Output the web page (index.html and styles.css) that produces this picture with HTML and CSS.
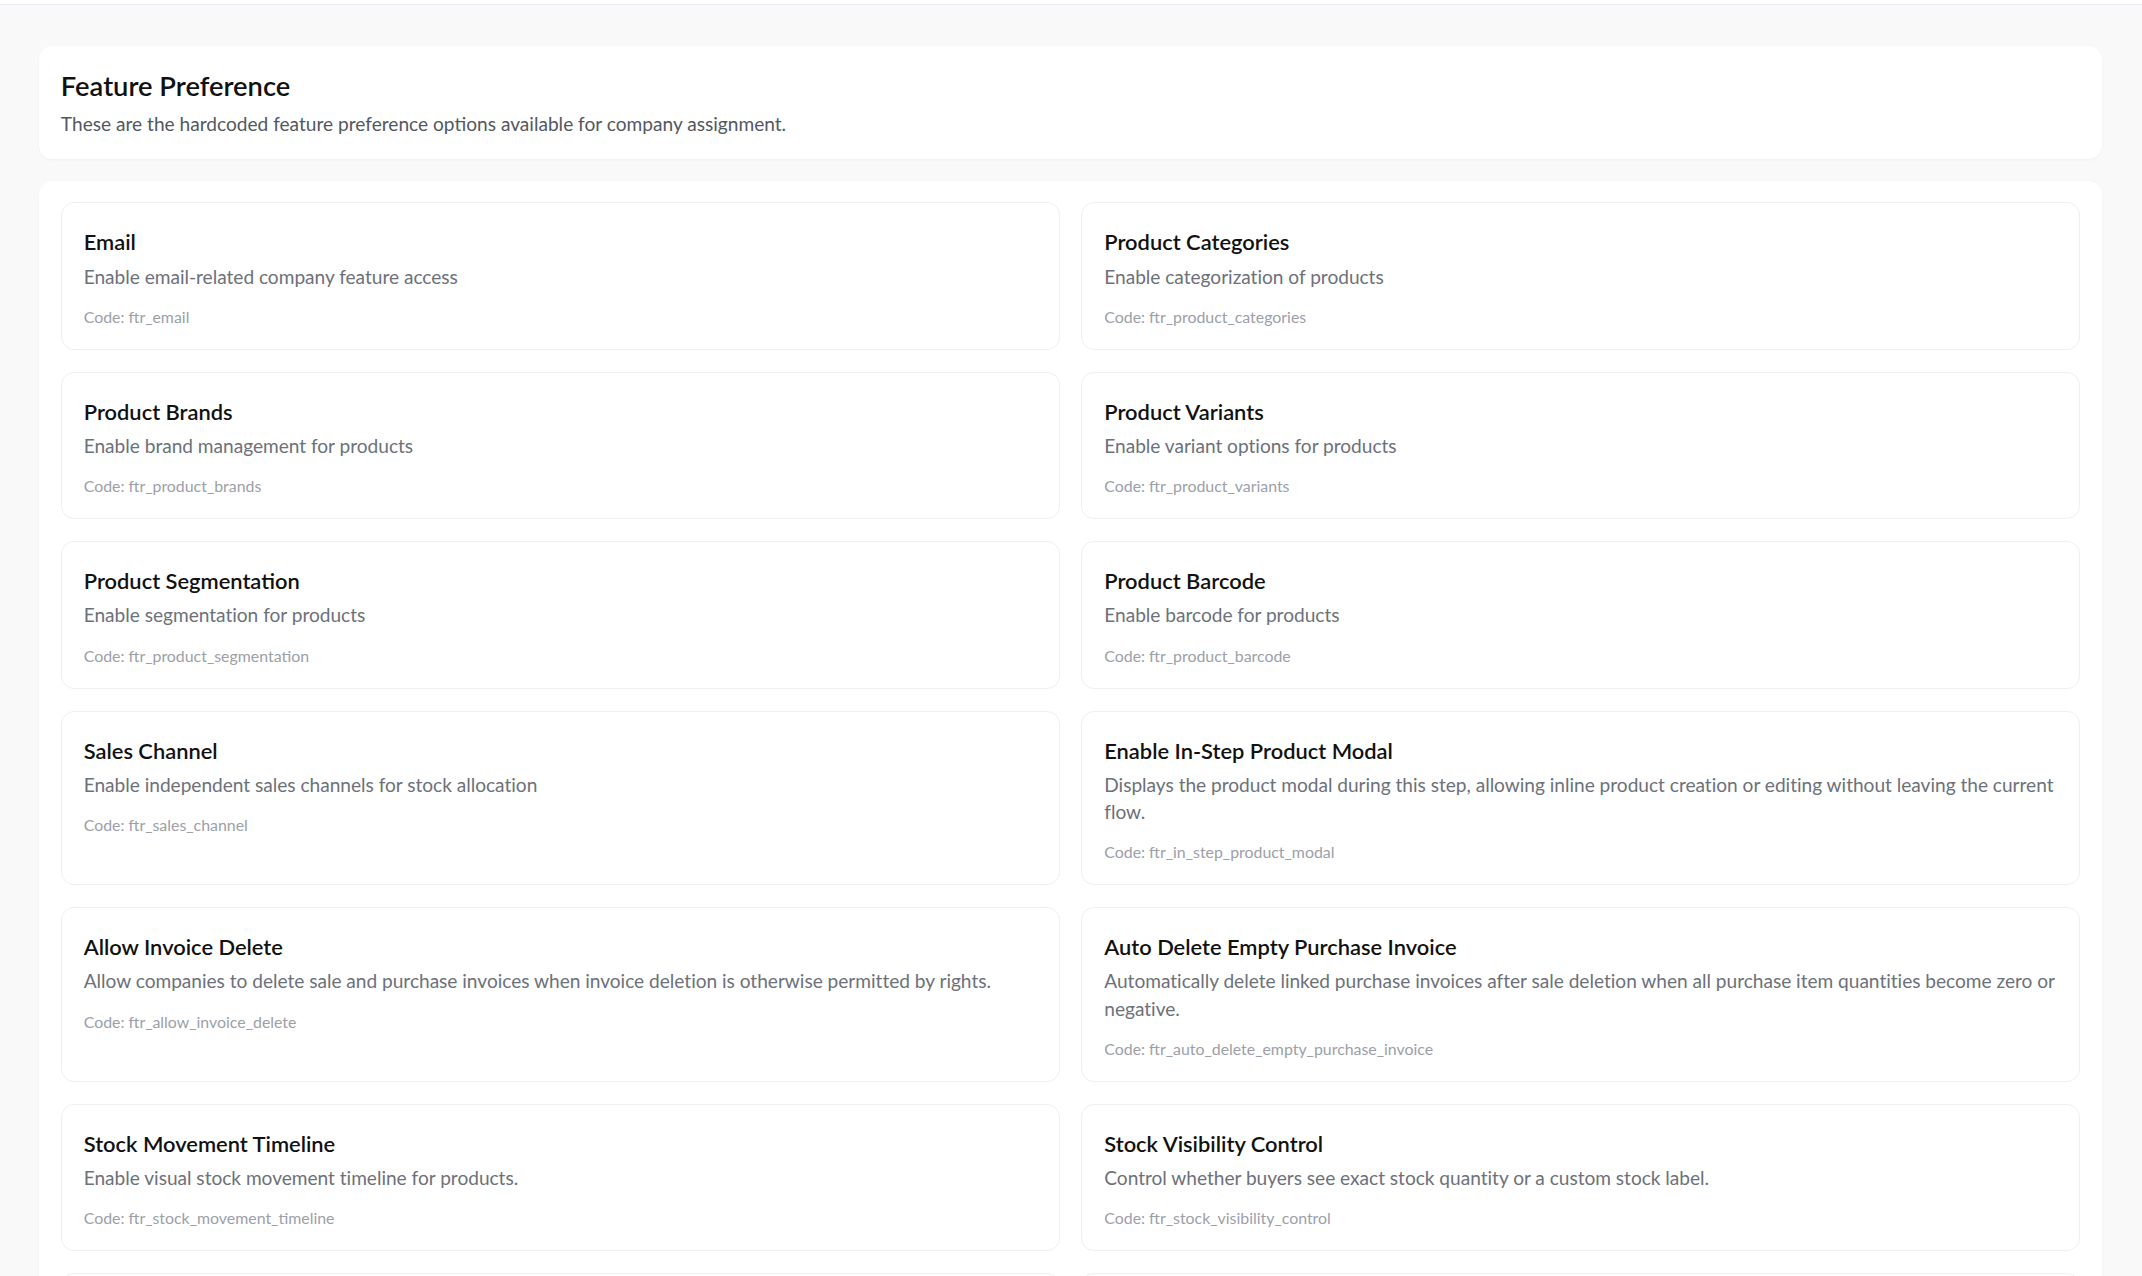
FILE: index.html
```html
<!DOCTYPE html>
<html lang="en">
<head>
<meta charset="utf-8">
<title>Feature Preference</title>
<link rel="stylesheet" href="styles.css">
</head>
<body>
<div class="topbar"></div>
<main class="page">
  <section class="panel header-panel">
    <h1 class="page-title">Feature Preference</h1>
    <p class="page-subtitle">These are the hardcoded feature preference options available for company assignment.</p>
  </section>
  <section class="panel list-panel">
    <div class="feature-grid">
      <div class="feature-card"><h3 class="feature-name">Email</h3><p class="feature-desc">Enable email-related company feature access</p><p class="feature-code">Code: ftr_email</p></div>
      <div class="feature-card"><h3 class="feature-name">Product Categories</h3><p class="feature-desc">Enable categorization of products</p><p class="feature-code">Code: ftr_product_categories</p></div>
      <div class="feature-card"><h3 class="feature-name">Product Brands</h3><p class="feature-desc">Enable brand management for products</p><p class="feature-code">Code: ftr_product_brands</p></div>
      <div class="feature-card"><h3 class="feature-name">Product Variants</h3><p class="feature-desc">Enable variant options for products</p><p class="feature-code">Code: ftr_product_variants</p></div>
      <div class="feature-card"><h3 class="feature-name">Product Segmentation</h3><p class="feature-desc">Enable segmentation for products</p><p class="feature-code">Code: ftr_product_segmentation</p></div>
      <div class="feature-card"><h3 class="feature-name">Product Barcode</h3><p class="feature-desc">Enable barcode for products</p><p class="feature-code">Code: ftr_product_barcode</p></div>
      <div class="feature-card"><h3 class="feature-name">Sales Channel</h3><p class="feature-desc">Enable independent sales channels for stock allocation</p><p class="feature-code">Code: ftr_sales_channel</p></div>
      <div class="feature-card"><h3 class="feature-name">Enable In-Step Product Modal</h3><p class="feature-desc">Displays the product modal during this step, allowing inline product creation or editing without leaving the current flow.</p><p class="feature-code">Code: ftr_in_step_product_modal</p></div>
      <div class="feature-card"><h3 class="feature-name">Allow Invoice Delete</h3><p class="feature-desc">Allow companies to delete sale and purchase invoices when invoice deletion is otherwise permitted by rights.</p><p class="feature-code">Code: ftr_allow_invoice_delete</p></div>
      <div class="feature-card"><h3 class="feature-name">Auto Delete Empty Purchase Invoice</h3><p class="feature-desc">Automatically delete linked purchase invoices after sale deletion when all purchase item quantities become zero or negative.</p><p class="feature-code">Code: ftr_auto_delete_empty_purchase_invoice</p></div>
      <div class="feature-card"><h3 class="feature-name">Stock Movement Timeline</h3><p class="feature-desc">Enable visual stock movement timeline for products.</p><p class="feature-code">Code: ftr_stock_movement_timeline</p></div>
      <div class="feature-card"><h3 class="feature-name">Stock Visibility Control</h3><p class="feature-desc">Control whether buyers see exact stock quantity or a custom stock label.</p><p class="feature-code">Code: ftr_stock_visibility_control</p></div>
      <div class="feature-card feature-card-empty"></div>
      <div class="feature-card feature-card-empty"></div>
    </div>
  </section>
</main>
</body>
</html>
```
FILE: styles.css
```css
* { box-sizing: border-box; }
html, body { margin: 0; padding: 0; }
body {
  background: #f9f9f9;
  font-family: "Lato", "Open Sans", sans-serif;
  color: #1a1a1a;
  overflow: hidden;
}
.topbar {
  height: 5px;
  background: #ffffff;
  border-bottom: 1px solid #e6e9ef;
}
.page {
  padding: 41px 40px 0 39px;
  display: flex;
  flex-direction: column;
  gap: 22px;
}
.panel {
  background: #ffffff;
  border-radius: 13.66px;
  box-shadow: 0 1px 3px rgba(0, 0, 0, 0.04);
}
.header-panel { padding: 24px 21.86px 21px; }
.page-title {
  margin: 0 0 6.8px;
  font-size: 27.32px;
  line-height: 32.78px;
  font-weight: 600;
  color: #111111;
}
.page-subtitle {
  margin: 0;
  font-size: 19.12px;
  line-height: 28px;
  color: #53585f;
}
.list-panel { padding: 21.86px; }
.feature-grid {
  display: grid;
  grid-template-columns: 1fr 1fr;
  gap: 21.86px;
}
.feature-card {
  border: 1px solid #efefef;
  border-radius: 13px;
  padding: 23px 21.86px 22.3px;
  background: #ffffff;
}
.feature-card-empty { min-height: 147px; }
.feature-name {
  margin: 0 0 3.46px;
  font-size: 21.86px;
  line-height: 32.78px;
  font-weight: 600;
  color: #111111;
}
.feature-desc {
  margin: 0 0 17px;
  font-size: 19.12px;
  line-height: 27.32px;
  letter-spacing: -0.02px;
  color: #6c717a;
}
.feature-code {
  margin: 0;
  font-size: 15.9px;
  line-height: 19.67px;
  color: #9ca0a8;
}
```
